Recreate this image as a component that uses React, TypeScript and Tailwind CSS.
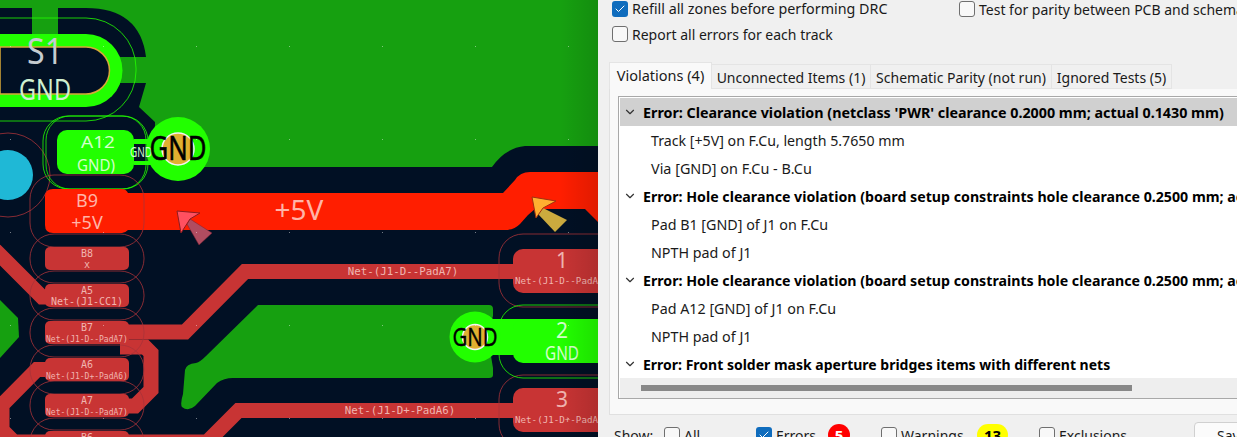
import React from 'react';
import { ChevronDown, Check } from 'lucide-react';

const MONO = "font-['DejaVu_Sans_Mono',monospace]";
const SANS = "font-['Noto_Sans',sans-serif]";

const RED = '#c83434';
const RED_LABEL = '#f0b4b0';
const DIM_OUTLINE = '#a83238';

const gridDots: [number, number][] = [];
for (let x = 10; x < 598; x += 93) {
  for (let y = 46; y < 437; y += 93) {
    gridDots.push([x, y]);
  }
}

const leftPads = [
  { top: 247, name: 'B8', net: 'x', size: 10 },
  { top: 284, name: 'A5', net: 'Net-(J1-CC1)', size: 10 },
  { top: 321, name: 'B7', net: 'Net-(J1-D--PadA7)', size: 8 },
  { top: 358, name: 'A6', net: 'Net-(J1-D+-PadA6)', size: 8 },
  { top: 394, name: 'A7', net: 'Net-(J1-D--PadA7)', size: 8 },
  { top: 431, name: 'B6', net: '', size: 8 },
];

const PcbCanvas: React.FC = () => (
  <svg width="598" height="437" viewBox="0 0 598 437" className="block shrink-0">
    <defs>
      <linearGradient id="edge" x1="0" x2="1" y1="0" y2="0">
        <stop offset="0" stopColor="#000" stopOpacity="0" />
        <stop offset="1" stopColor="#000" stopOpacity="0.12" />
      </linearGradient>
    </defs>
    <rect width="598" height="437" fill="#011024" />

    {/* copper zones */}
    <path
      d="M0 0H598V146H525Q505 148 492 167H155V122L139 107L146 83H120V57H146Q140 8 86 8H58V34H32V8H0Z"
      fill="#16a010"
    />
    <path
      d="M258 305H489Q493 305 493 309V316L490 325V350L493 368V375Q493 378 489 378H233Q224 378 217 383L195 406Q188 412 182 407Q180 404 183 394L185 370Q186 364 196 363Q200 362 206 356Z"
      fill="#16a010"
    />
    <path d="M0 300L18 318L19 337L0 358Z" fill="#16a010" />

    {/* S1 slot */}
    <path d="M0 34H86A36.500 36.500 0 0 1 86 107H0Z" fill="#22ff00" />
    <path d="M0 47H86A23.500 23.500 0 0 1 86 94H0Z" fill="#011024" stroke="#d8a838" strokeWidth="1.500" />
    <rect x="-60" y="18" width="196" height="103" rx="50" fill="none" stroke="#22ff00" strokeWidth="0.800" />

    {/* hole + outline */}
    <circle cx="8" cy="175" r="42" fill="none" stroke={DIM_OUTLINE} strokeWidth="0.800" />
    <circle cx="8" cy="175" r="25" fill="#1fb8d6" />

    {/* tracks */}
    <g fill="none" stroke={RED} strokeWidth="15" strokeLinejoin="miter">
      <path d="M-5 250L42 297H60" />
      <path d="M120 332H185L245 271.500H520" />
      <path d="M120 347H145L151 353V390L135 406H120" />
      <path d="M50 369.500H37L2 405V430L14 442H207L238.500 410.500H520" />
    </g>

    {/* A12 */}
    <rect x="43" y="116" width="105" height="73" rx="25" fill="none" stroke="#22ff00" strokeWidth="0.800" />
    <rect x="46" y="116" width="100" height="73" rx="24" fill="none" stroke="#22ff00" strokeWidth="0.800" />
    <rect x="134" y="139" width="18" height="5" fill="#22ff00" />
    <rect x="134" y="161" width="18" height="4" fill="#22ff00" />
    <rect x="57" y="130" width="77" height="44" rx="10" fill="#22ff00" />

    {/* vias */}
    <circle cx="178" cy="149" r="32" fill="#22ff00" />
    <circle cx="178" cy="149" r="16" fill="#e0b030" stroke="#f4f4f4" strokeWidth="1.500" />
    <rect x="490" y="319" width="108" height="36" fill="#22ff00" />
    <rect x="513" y="319" width="100" height="44" rx="10" fill="#22ff00" />
    <circle cx="475" cy="337" r="25.500" fill="#22ff00" />
    <circle cx="475" cy="337" r="12.500" fill="#e0b030" stroke="#f4f4f4" strokeWidth="1.500" />

    {/* +5V */}
    <path d="M53 189H122Q126 189 128 193H503L515 180Q520 172 530 172H598V222L585 209H535L528 215L520 224Q514 230 505 230H128Q125 233 122 233H53Q45 233 45 225V197Q45 189 53 189Z" fill="#ff1e00" />
    <rect x="30" y="175" width="114" height="72" rx="24" fill="none" stroke={DIM_OUTLINE} strokeWidth="0.800" />

    {/* left pad column */}
    {leftPads.map(pad => (
      <g key={pad.name}>
        <rect x="45" y={pad.top} width="84" height="23" rx="5" fill={RED} />
        <rect x="30" y={pad.top - 13} width="114" height="49" rx="24" fill="none" stroke={DIM_OUTLINE} strokeWidth="0.800" />
        <text x="87" y={pad.top + 10} fontSize="10" fill={RED_LABEL} textAnchor="middle" className={MONO}>{pad.name}</text>
        <text x="87" y={pad.top + 21} fontSize={pad.size} fill={RED_LABEL} textAnchor="middle" className={MONO}>{pad.net}</text>
      </g>
    ))}

    {/* right connector pads */}
    <rect x="513" y="249" width="100" height="44" rx="10" fill={RED} />
    <rect x="513" y="388" width="100" height="44" rx="10" fill={RED} />
    <rect x="499" y="234" width="140" height="73" rx="24" fill="none" stroke={DIM_OUTLINE} strokeWidth="0.800" />
    <rect x="499" y="375" width="140" height="73" rx="24" fill="none" stroke={DIM_OUTLINE} strokeWidth="0.800" />
    <rect x="499" y="305" width="140" height="73" rx="24" fill="none" stroke="#22ff00" strokeWidth="0.800" />

    {/* DRC markers */}
    <path d="M190 219L212 233L199 245L187 224Z" fill="#b04c60" stroke="#7a2030" strokeWidth="0.500" />
    <path d="M177 211L200 213L190 219L181 233Z" fill="#ff5060" stroke="#8a1c20" strokeWidth="1" />
    <path d="M543 208L567 220L555 232L538 214Z" fill="#cbaa3e" />
    <path d="M532 197L556 201L543 208L536 218Z" fill="#ffb030" stroke="#a03010" strokeWidth="1" />

    {/* labels */}
    <text x="45" y="64" fontSize="36" fill="#c6ccd0" textAnchor="middle" textLength="36" lengthAdjust="spacingAndGlyphs" className={SANS}>S1</text>
    <text x="45" y="100" fontSize="29" fill="#d0f0d0" textAnchor="middle" textLength="52" lengthAdjust="spacingAndGlyphs" className={SANS}>GND</text>
    <text x="98" y="148" fontSize="17" fill="#d4ffcc" textAnchor="middle" textLength="34" lengthAdjust="spacingAndGlyphs" className={SANS}>A12</text>
    <text x="96" y="171" fontSize="17" fill="#d4ffcc" textAnchor="middle" textLength="38" lengthAdjust="spacingAndGlyphs" className={SANS}>GND)</text>
    <text x="141" y="157" fontSize="14" fill="#d4ffcc" textAnchor="middle" textLength="22" lengthAdjust="spacingAndGlyphs" className={SANS}>GND</text>
    <text x="178" y="160" fontSize="33" fill="#000" stroke="#000" strokeWidth="0.500" textAnchor="middle" textLength="57" lengthAdjust="spacingAndGlyphs" className={SANS}>GND</text>
    <text x="475" y="346" fontSize="26" fill="#000" stroke="#000" strokeWidth="0.400" textAnchor="middle" textLength="45" lengthAdjust="spacingAndGlyphs" className={SANS}>GND</text>
    <text x="87" y="207" fontSize="18" fill="#ffb4a8" textAnchor="middle" className={SANS}>B9</text>
    <text x="87" y="229" fontSize="18" fill="#ffb4a8" textAnchor="middle" className={SANS}>+5V</text>
    <text x="299" y="220" fontSize="28" fill="#ffb4a8" textAnchor="middle" className={SANS}>+5V</text>
    <text x="403" y="275" fontSize="10.800" fill={RED_LABEL} textAnchor="middle" className={MONO}>Net-(J1-D--PadA7)</text>
    <text x="400" y="414" fontSize="10.800" fill={RED_LABEL} textAnchor="middle" className={MONO}>Net-(J1-D+-PadA6)</text>
    <text x="562" y="268" fontSize="21" fill={RED_LABEL} textAnchor="middle" className={SANS}>1</text>
    <text x="515" y="284" fontSize="9.200" fill={RED_LABEL} className={MONO}>Net-(J1-D--PadA7)</text>
    <text x="562" y="338" fontSize="21" fill="#d4ffcc" textAnchor="middle" className={SANS}>2</text>
    <text x="562" y="360" fontSize="20" fill="#d4ffcc" textAnchor="middle" textLength="34" lengthAdjust="spacingAndGlyphs" className={SANS}>GND</text>
    <text x="562" y="407" fontSize="21" fill={RED_LABEL} textAnchor="middle" className={SANS}>3</text>
    <text x="515" y="423" fontSize="9.200" fill={RED_LABEL} className={MONO}>Net-(J1-D+-PadA6)</text>

    {gridDots.map(([x, y]) => (
      <rect key={`${x}-${y}`} x={x} y={y} width="1" height="1" fill="#ffffff" opacity="0.45" />
    ))}
    <rect x="560" y="0" width="38" height="437" fill="url(#edge)" />
  </svg>
);

const CheckBox: React.FC<{ checked?: boolean }> = ({ checked }) =>
  checked ? (
    <span className="flex h-4 w-4 shrink-0 items-center justify-center rounded-[3px] bg-[#0f6cbd]">
      <Check size={12} strokeWidth={2} color="#ffffff" />
    </span>
  ) : (
    <span className="h-4 w-4 shrink-0 rounded-[3px] border border-[#6f6f6f] bg-[#f8f8f8]" />
  );

const tabs = [
  { label: 'Unconnected Items (1)', width: 'w-[159px]' },
  { label: 'Schematic Parity (not run)', width: 'w-[181px]' },
  { label: 'Ignored Tests (5)', width: 'w-[120px]' },
];

const rows = [
  { text: "Error: Clearance violation (netclass 'PWR' clearance 0.2000 mm; actual 0.1430 mm)", head: true, selected: true, size: 'text-[14.3px]' },
  { text: 'Track [+5V] on F.Cu, length 5.7650 mm', size: 'text-[14.2px]' },
  { text: 'Via [GND] on F.Cu - B.Cu', size: 'text-[14.4px]' },
  { text: 'Error: Hole clearance violation (board setup constraints hole clearance 0.2500 mm; actual 0.2000 mm)', head: true, size: 'text-[14.2px]' },
  { text: 'Pad B1 [GND] of J1 on F.Cu', size: 'text-[14.3px]' },
  { text: 'NPTH pad of J1', size: 'text-[14.3px]' },
  { text: 'Error: Hole clearance violation (board setup constraints hole clearance 0.2500 mm; actual 0.2000 mm)', head: true, size: 'text-[14.2px]' },
  { text: 'Pad A12 [GND] of J1 on F.Cu', size: 'text-[14.3px]' },
  { text: 'NPTH pad of J1', size: 'text-[14.3px]' },
  { text: 'Error: Front solder mask aperture bridges items with different nets', head: true, size: 'text-[14px]' },
];

const DrcPanel: React.FC = () => (
  <div className={`flex h-[437px] min-w-0 flex-1 flex-col overflow-hidden bg-[#f0f0f0] text-[14px] text-[#1a1a1a] ${SANS}`}>
    <div className="flex h-[18px] shrink-0 items-center pl-[14px]">
      <span className="flex w-[347px] shrink-0 items-center gap-1">
        <CheckBox checked />
        <span className="text-[14.3px] whitespace-nowrap">Refill all zones before performing DRC</span>
      </span>
      <span className="flex items-center gap-1 whitespace-nowrap">
        <CheckBox />
        <span>Test for parity between PCB and schematic</span>
      </span>
    </div>
    <div className="mt-[7px] flex h-[18px] shrink-0 items-center gap-1 pl-[14px]">
      <CheckBox />
      <span className="whitespace-nowrap">Report all errors for each track</span>
    </div>

    <div className="mt-[19px] flex h-[27px] shrink-0 items-end pl-[11px]">
      <div className="flex h-[27px] w-[103px] items-center justify-center border border-b-0 border-[#e4e4e4] bg-[#f9f9f9] text-[14.5px] whitespace-nowrap">Violations (4)</div>
      {tabs.map(tab => (
        <div key={tab.label} className={`flex h-[25px] items-center justify-center border border-l-0 border-[#e4e4e4] bg-[#f0f0f0] pt-px whitespace-nowrap ${tab.width}`}>{tab.label}</div>
      ))}
    </div>

    <div className="ml-[11px] flex h-[326px] shrink-0 flex-col border-b border-l border-[#e0e0e0] bg-[#f9f9f9] pt-[7px] pl-[8px]">
      <div className="flex h-[303px] shrink-0 flex-col overflow-hidden border-t border-b border-l border-[#a8a8a8] bg-white pt-px pl-px">
        <div className="h-[280px] shrink-0 overflow-hidden">
          {rows.map((row, i) => (
            <div
              key={i}
              className={`flex h-[28px] items-center whitespace-nowrap ${row.size} ${row.selected ? 'bg-[#d0d0d0]' : ''} ${row.head ? 'font-bold text-black' : ''}`}
            >
              {row.head ? (
                <span className="flex w-[23px] shrink-0 pl-[3px]">
                  <ChevronDown size={14} strokeWidth={2} color="#333333" />
                </span>
              ) : (
                <span className="w-[31px] shrink-0" />
              )}
              <span className="pt-px">{row.text}</span>
            </div>
          ))}
        </div>
        <div className="flex h-[20px] shrink-0 items-center bg-[#eeeeee] pl-[21px]">
          <div className="h-[6px] w-[491px] bg-[#888888]" />
        </div>
      </div>
    </div>

    <div className="mt-[7px] flex h-[26px] shrink-0 items-center pl-[16px] whitespace-nowrap [&>*]:shrink-0">
      <span className="w-[50px]">Show:</span>
      <CheckBox />
      <span className="ml-1 w-[72px]">All</span>
      <CheckBox checked />
      <span className="ml-1 w-[52px]">Errors</span>
      <span className="flex h-[22px] w-[22px] items-center justify-center rounded-full bg-[#ff0000] text-[15px] font-bold text-white">5</span>
      <span className="w-[31px]" />
      <CheckBox />
      <span className="ml-1 w-[76px]">Warnings</span>
      <span className="flex h-[22px] w-[31px] items-center justify-center rounded-full bg-[#ffff00] text-[15px] font-bold text-black">13</span>
      <span className="w-[31px]" />
      <CheckBox />
      <span className="ml-1 w-[135px]">Exclusions</span>
      <span className="flex h-[26px] w-[70px] items-center rounded-[4px] border border-[#d0d0d0] bg-[#fbfbfb] pl-[22px]">Save...</span>
    </div>
  </div>
);

export default function App() {
  return (
    <div className="flex h-[437px] w-[1237px] overflow-hidden bg-[#f0f0f0]">
      <PcbCanvas />
      <DrcPanel />
    </div>
  );
}
